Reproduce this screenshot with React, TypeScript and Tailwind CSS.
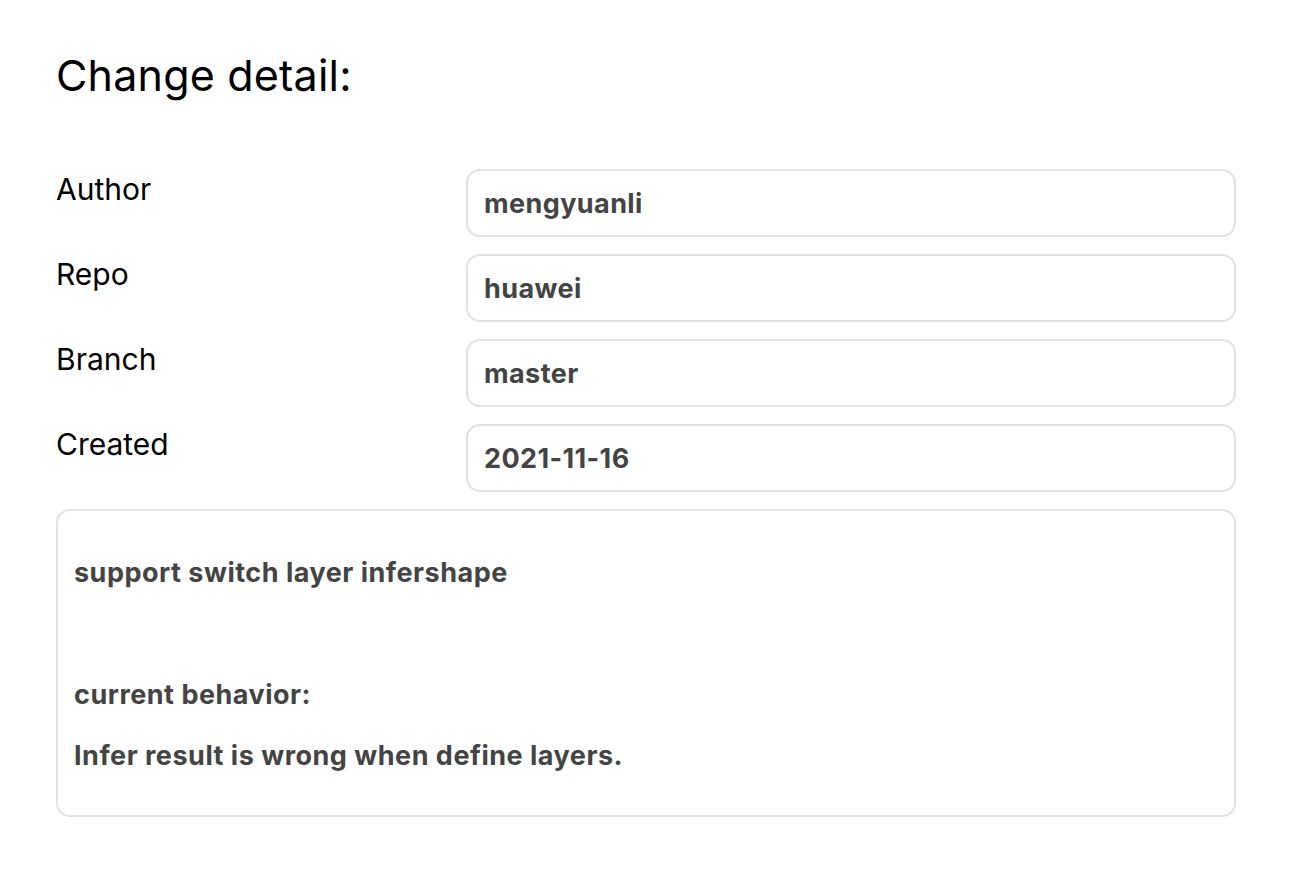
export default function App() {
  const fields = [
    { label: "Author", value: "mengyuanli" },
    { label: "Repo", value: "huawei" },
    { label: "Branch", value: "master" },
    { label: "Created", value: "2021-11-16" },
  ];

  return (
    <div className="min-h-screen bg-white px-[56px] pt-[47px] font-['Inter',sans-serif]">
      <h1 className="text-[43px] leading-[56px] text-black tracking-[0.2px]">Change detail:</h1>

      <div className="mt-[66px] w-[1180px] flex flex-col gap-[17px]">
        {fields.map((f) => (
          <div key={f.label} className="flex">
            <div className="w-[410px] text-[30px] leading-[40px] text-black">
              {f.label}
            </div>
            <div className="flex-1 h-[68px] flex items-center rounded-[14px] border-2 border-[#e2e2e2] px-[16px] pt-[3px] text-[27px] tracking-[0.4px] font-bold text-[#444]">
              {f.value}
            </div>
          </div>
        ))}
      </div>

      <div className="mt-[17px] w-[1180px] h-[308px] rounded-[14px] border-2 border-[#e2e2e2] px-[16px] pt-[31px] text-[27px] tracking-[0.5px] font-bold text-[#444] leading-[61px]">
        <p>support switch layer infershape</p>
        <p>&nbsp;</p>
        <p>current behavior:</p>
        <p>Infer result is wrong when define layers.</p>
      </div>
    </div>
  );
}
